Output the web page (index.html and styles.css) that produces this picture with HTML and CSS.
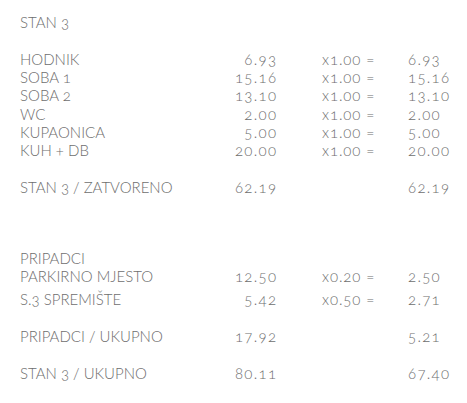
FILE: index.html
```html
<!DOCTYPE html>
<html>
<head>
<meta charset="utf-8">
<link rel="stylesheet" href="styles.css">
</head>
<body>
<div class="sheet">
  <div class="row title"><span class="label">STAN 3</span></div>

  <div class="group g-rooms">
    <div class="row"><span class="label">HODNIK</span><span class="num">6.93</span><span class="mult">x1.00 =</span><span class="res">6.93</span></div>
    <div class="row"><span class="label">SOBA 1</span><span class="num">15.16</span><span class="mult">x1.00 =</span><span class="res">15.16</span></div>
    <div class="row"><span class="label">SOBA 2</span><span class="num">13.10</span><span class="mult">x1.00 =</span><span class="res">13.10</span></div>
    <div class="row"><span class="label">WC</span><span class="num">2.00</span><span class="mult">x1.00 =</span><span class="res">2.00</span></div>
    <div class="row"><span class="label">KUPAONICA</span><span class="num">5.00</span><span class="mult">x1.00 =</span><span class="res">5.00</span></div>
    <div class="row"><span class="label">KUH + DB</span><span class="num">20.00</span><span class="mult">x1.00 =</span><span class="res">20.00</span></div>
  </div>

  <div class="row sum"><span class="label">STAN 3 / ZATVORENO</span><span class="num">62.19</span><span class="mult"></span><span class="res">62.19</span></div>

  <div class="group g-extra">
    <div class="row"><span class="label">PRIPADCI</span></div>
    <div class="row"><span class="label">PARKIRNO MJESTO</span><span class="num">12.50</span><span class="mult">x0.20 =</span><span class="res">2.50</span></div>
    <div class="row spaced"><span class="label">S.3 SPREMIŠTE</span><span class="num">5.42</span><span class="mult">x0.50 =</span><span class="res">2.71</span></div>
  </div>

  <div class="row sum"><span class="label">PRIPADCI / UKUPNO</span><span class="num">17.92</span><span class="mult"></span><span class="res">5.21</span></div>
  <div class="row sum"><span class="label">STAN 3 / UKUPNO</span><span class="num">80.11</span><span class="mult"></span><span class="res">67.40</span></div>
</div>
</body>
</html>
```

FILE: styles.css
```css
html, body {
  margin: 0;
  padding: 0;
  background: #ffffff;
}

.sheet {
  padding: 13px 0 0 20px;
  font-family: "Lato", "Open Sans", sans-serif;
  font-weight: 300;
  font-size: 15px;
  color: #6e6e6e;
  font-variant-numeric: oldstyle-nums;
  font-feature-settings: "onum" 1;
}

.row {
  display: grid;
  grid-template-columns: 210px 46px 132px 1fr;
  line-height: 18.2px;
  height: 18.2px;
  white-space: nowrap;
}

.num,
.res {
  letter-spacing: 1.3px;
}

.num {
  text-align: right;
  margin-right: -1.3px;
}

.mult {
  padding-left: 46px;
  letter-spacing: 0.9px;
}

.g-rooms {
  margin-top: 18.8px;
}

.sum {
  margin-top: 18.8px;
}

.g-extra {
  margin-top: 52.8px;
}

.spaced {
  margin-top: 4.8px;
}
```
